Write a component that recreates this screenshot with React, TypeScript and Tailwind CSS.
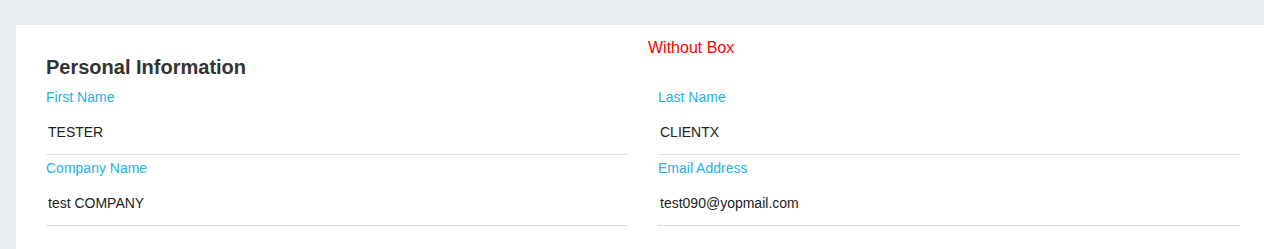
import React from "react";

const Field = ({ label, value }: { label: string; value: string }) => (
  <div className="pt-[3px]">
    <div className="text-[14px] leading-5 text-[#22b2ea]">{label}</div>
    <div className="h-[48px] border-b border-[#dddddd] pl-[2px] pt-[15px] text-[14px] leading-5 text-[#222222]">
      {value}
    </div>
  </div>
);

export default function App() {
  return (
    <div
      className="min-h-screen bg-[#e9ecf1] pt-[25px]"
      style={{ fontFamily: '"Liberation Sans", Arial, sans-serif' }}
    >
      <div className="ml-4 bg-white pl-[30px] pr-[24px] pt-[14px] pb-[30px]">
        <div className="ml-[602px] text-[16px] leading-[17px] text-[#ff0000]">Without Box</div>
        <h4 className="mb-[6px] text-[20px] font-bold leading-[22px] text-[#333333]">
          Personal Information
        </h4>
        <div className="grid grid-cols-2 gap-x-[30px]">
          <Field label="First Name" value="TESTER" />
          <Field label="Last Name" value="CLIENTX" />
          <Field label="Company Name" value="test COMPANY" />
          <Field label="Email Address" value="test090@yopmail.com" />
        </div>
      </div>
    </div>
  );
}
